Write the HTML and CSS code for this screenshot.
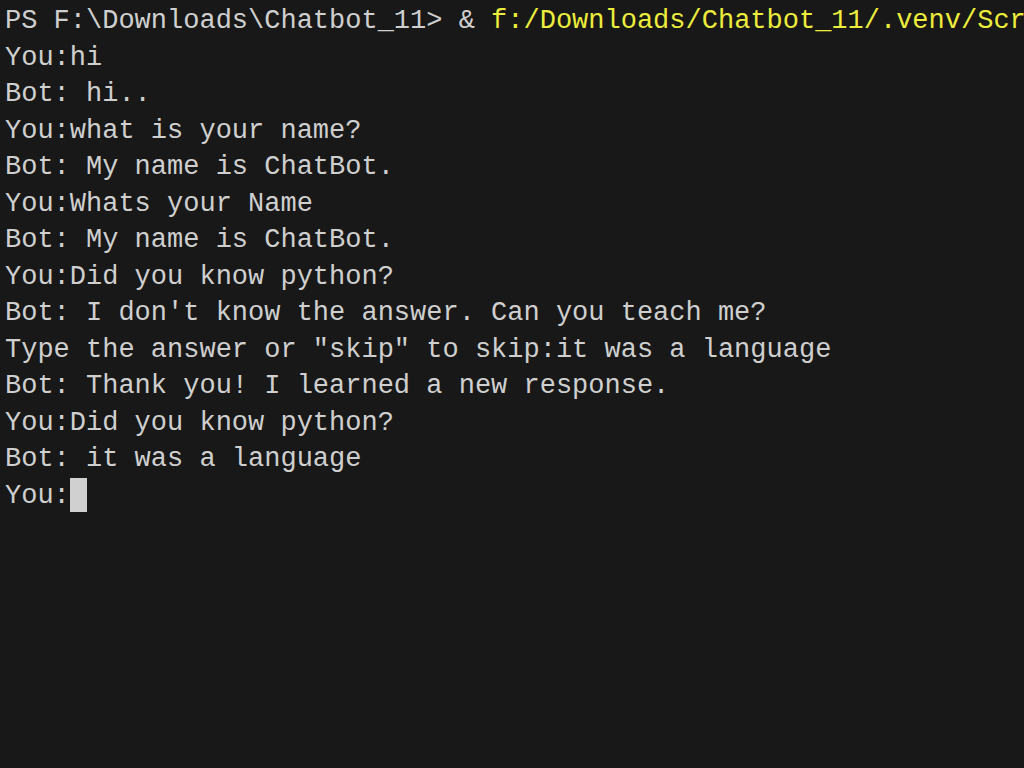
FILE: index.html
```html
<!DOCTYPE html>
<html lang="en">
<head>
<meta charset="utf-8">
<title>Terminal</title>
<link rel="stylesheet" href="styles.css">
</head>
<body>
<main class="terminal">
<div class="line">PS F:\Downloads\Chatbot_11&gt; &amp; <span class="cmd">f:/Downloads/Chatbot_11/.venv/Scripts/python.exe f:/Downloads/Chatbot_11/chatbot.py</span></div>
<div class="line">You:hi</div>
<div class="line">Bot: hi..</div>
<div class="line">You:what is your name?</div>
<div class="line">Bot: My name is ChatBot.</div>
<div class="line">You:Whats your Name</div>
<div class="line">Bot: My name is ChatBot.</div>
<div class="line">You:Did you know python?</div>
<div class="line">Bot: I don't know the answer. Can you teach me?</div>
<div class="line">Type the answer or "skip" to skip:it was a language</div>
<div class="line">Bot: Thank you! I learned a new response.</div>
<div class="line">You:Did you know python?</div>
<div class="line">Bot: it was a language</div>
<div class="line">You:<span class="cursor"></span></div>
</main>
</body>
</html>
```
FILE: styles.css
```css
html, body {
  margin: 0;
  padding: 0;
  background: #181818;
  width: 1024px;
  height: 768px;
  overflow: hidden;
}

.terminal {
  padding: 3px 0 0 5px;
  font-family: "Liberation Mono", "DejaVu Sans Mono", monospace;
  font-size: 27px;
  line-height: 36.5px;
  color: #cfcfcf;
}

.line {
  white-space: pre;
  overflow: hidden;
  height: 36.5px;
}

.cmd {
  color: #ecec3c;
}

.cursor {
  display: inline-block;
  width: 17px;
  height: 36px;
  margin-top: -2px;
  background: #d0d0d0;
  vertical-align: top;
}
```
